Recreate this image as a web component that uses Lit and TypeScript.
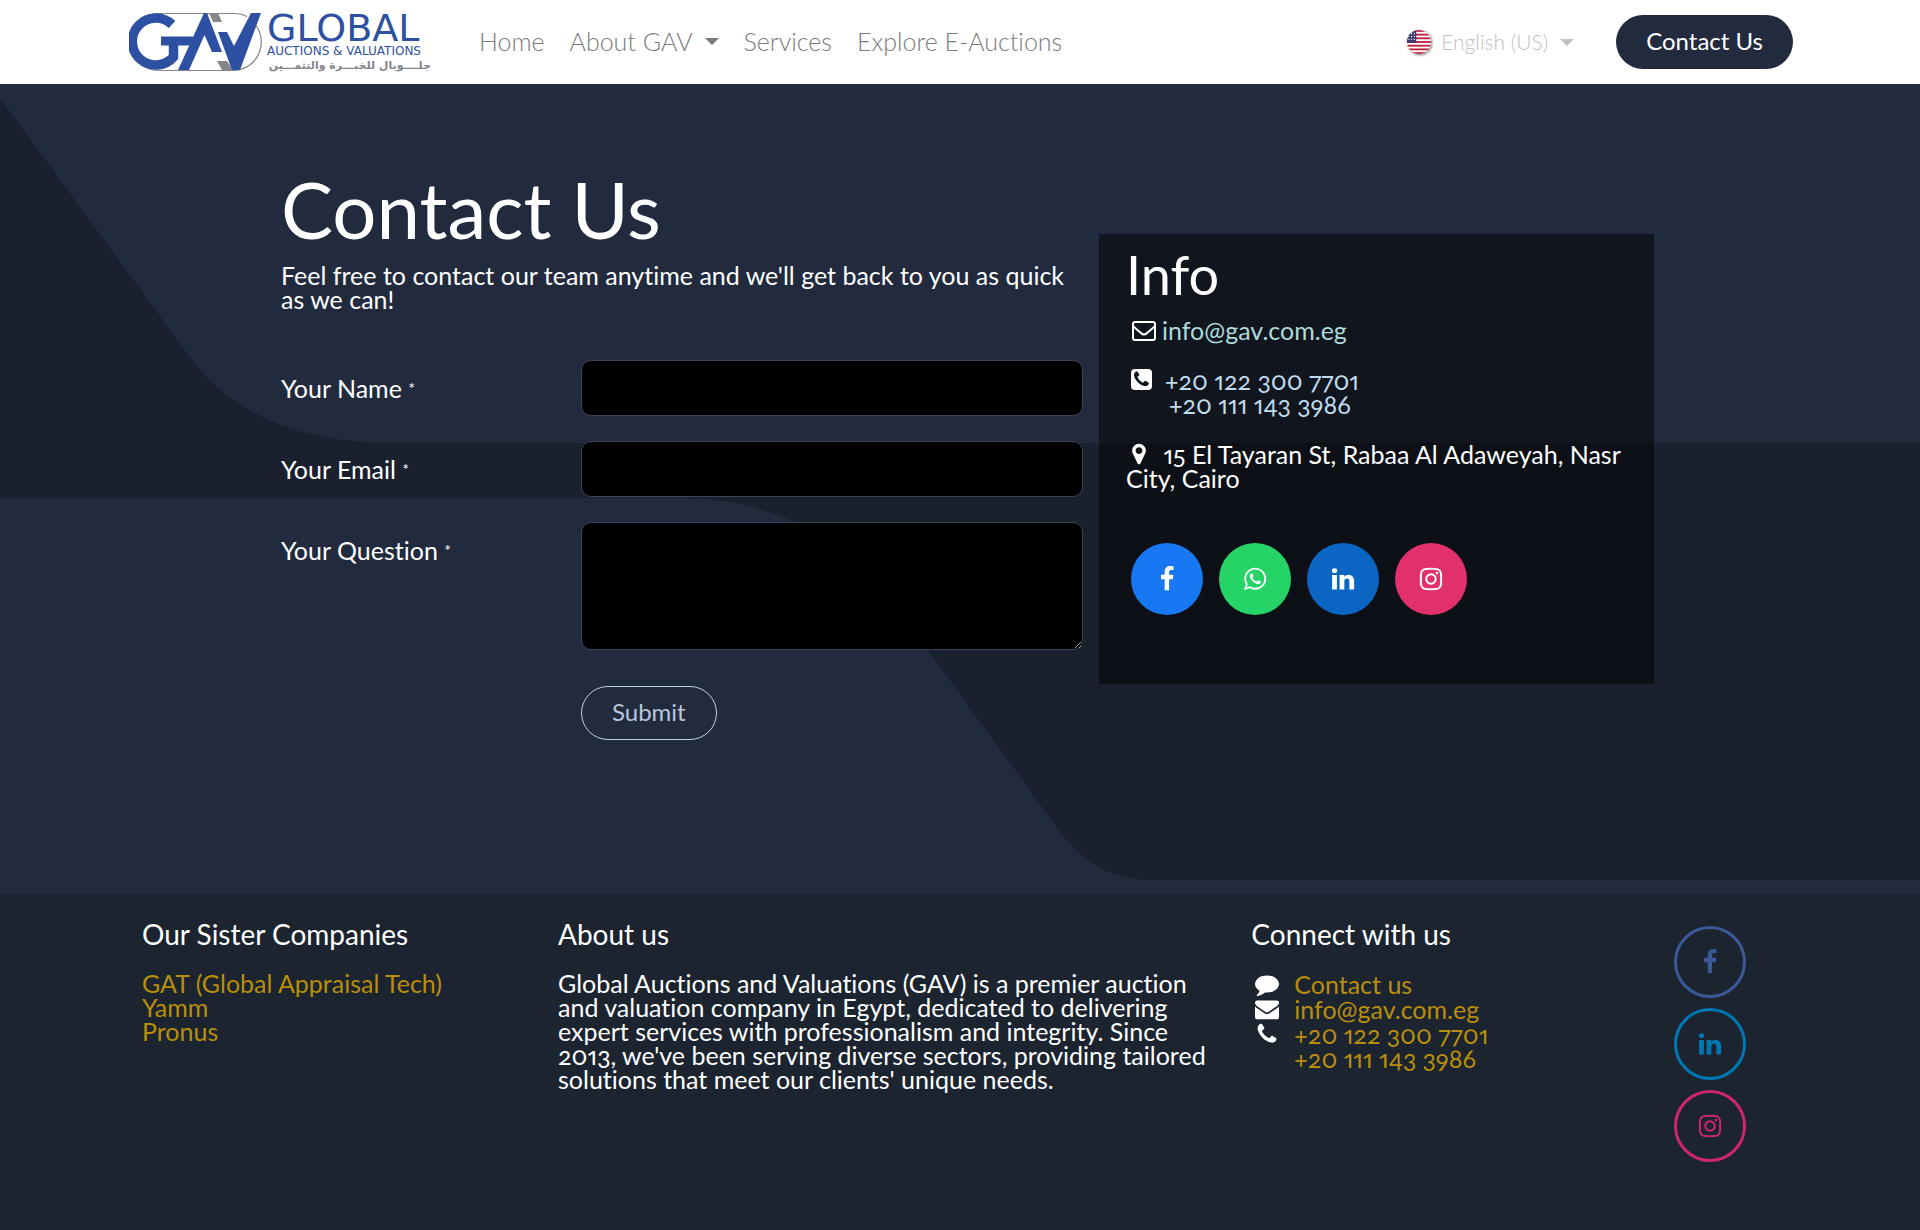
import { LitElement, html, css, svg } from "lit";
import { customElement } from "lit/decorators.js";

const ICONS = {
  facebook: "M1343 12v264h-157q-86 0-116 36t-30 108v189h293l-39 296h-254v759h-306v-759h-255v-296h255v-218q0-186 104-288.500t277-102.500q147 0 228 12z",
  linkedin: "M477 625v991h-330v-991h330zm21-306q1 73-50.500 122t-135.500 49h-2q-82 0-132-49t-50-122q0-74 51.500-122.500t134.500-48.500 133 48.500 51 122.500zm1166 729v568h-329v-530q0-105-40.500-164.500t-126.500-59.500q-63 0-105.500 34.500t-63.500 85.500q-11 30-11 81v553h-329q2-399 2-647t-1-296l-1-48h329v144h-2q20-32 41-56t56.500-52 87-43.500 114.500-15.500q171 0 275 113.500t104 332.500z",
  instagram: "M1152 896q0-106-75-181t-181-75-181 75-75 181 75 181 181 75 181-75 75-181zm138 0q0 164-115 279t-279 115-279-115-115-279 115-279 279-115 279 115 115 279zm108-410q0 38-27 65t-65 27-65-27-27-65 27-65 65-27 65 27 27 65zm-502-220q-7 0-76.500-.5t-105.500 0-96.500 3-103 10-71.500 18.500q-50 20-88 58t-58 88q-11 29-18.500 71.500t-10 103-3 96.500 0 105.500.5 76.500-.5 76.500 0 105.500 3 96.500 10 103 18.500 71.500q20 50 58 88t88 58q29 11 71.500 18.500t103 10 96.500 3 105.500 0 76.500-.5 76.500.5 105.500 0 96.500-3 103-10 71.500-18.500q50-20 88-58t58-88q11-29 18.500-71.500t10-103 3-96.500 0-105.500-.5-76.500.5-76.500 0-105.500-3-96.500-10-103-18.500-71.500q-20-50-58-88t-88-58q-29-11-71.500-18.500t-103-10-96.500-3-105.500 0-76.500.5zm768 630q0 229-5 317-10 208-124 322t-322 124q-88 5-317 5t-317-5q-208-10-322-124t-124-322q-5-88-5-317t5-317q10-208 124-322t322-124q88-5 317-5t317 5q208 10 322 124t124 322q5 88 5 317z",
  whatsapp: "M1113 974q13 0 97.500 44t89.500 53q2 5 2 15 0 33-17 76-16 39-71 65.500t-102 26.500q-57 0-190-62-98-45-170-118t-148-185q-72-107-71-194v-8q3-91 74-158 24-22 52-22 6 0 18 1.500t19 1.500q19 0 26.500 6.500t15.500 27.500q8 20 33 88t25 75q0 21-34.500 57.500t-34.500 46.500q0 7 5 15 34 73 102 137 56 53 151 101 12 7 22 7 15 0 54-48.500t52-48.500zm-203 530q127 0 243.500-50t200.500-134 134-200.500 50-243.500-50-243.500-134-200.500-200.500-134-243.500-50-243.500 50-200.500 134-134 200.500-50 243.500q0 203 120 368l-79 233 242-77q158 104 345 104zm0-1382q153 0 292.500 60t240.500 161 161 240.500 60 292.500-60 292.500-161 240.500-240.500 161-292.500 60q-195 0-365-94l-417 134 136-405q-108-178-108-389 0-153 60-292.500t161-240.500 240.500-161 292.500-60z",
  envelope: "M1792 710v794q0 66-47 113t-113 47h-1472q-66 0-113-47t-47-113v-794q44 49 101 87 362 246 497 345 57 42 92.500 65.500t94.500 48 110 24.500h2q51 0 110-24.500t94.500-48 92.500-65.500q170-123 498-345 57-39 100-87zm0-294q0 79-49 151t-122 123q-376 261-468 325-10 7-42.500 31t-54 38.500-52 32.500-57.500 27-50 9h-2q-23 0-50-9t-57.500-27-52-32.500-54-38.500-42.500-31q-91-64-262-182.500t-205-142.500q-62-42-117-115.500t-55-136.500q0-78 41.500-130t118.500-52h1472q65 0 112.500 47t47.500 113z",
  phone: "M1600 1240q0 27-10 70.500t-21 68.500q-21 50-122 106-94 51-186 51-27 0-53-3.500t-57.500-12.500-47-14.500-55.500-20.500-49-18q-98-35-175-83-127-79-264-216t-216-264q-48-77-83-175-3-9-18-49t-20.500-55.500-14.500-47-12.500-57.500-3.500-53q0-92 51-186 56-101 106-122 25-11 68.500-21t70.500-10q14 0 21 3 18 6 53 76 11 19 30 54t35 63.500 31 53.500q3 4 17.500 25t21.500 35.500 7 28.500q0 20-28.500 50t-62 55-62 53-28.500 46q0 9 5 22.500t8.500 20.500 14 24 11.500 19q76 137 174 235t235 174q2 1 19 11.500t24 14 20.500 8.500 22.500 5q18 0 46-28.500t53-62 55-62 50-28.500q14 0 28.500 7t35.500 21.500 25 17.500q25 15 53.500 31t63.500 35 54 30q70 35 76 53 3 7 3 21z",
  comment: "M1792 896q0 174-120 321.500t-326 233-450 85.500q-70 0-145-8-198 175-460 242-49 14-114 22-17 2-30.500-9t-17.500-29v-1q-3-4-.5-12t2-10 4.500-9.500l6-9 7-8.500 8-9q7-8 31-34.500t34.500-38 31-39.500 32.500-51 27-59 26-76q-157-89-247.500-220t-90.500-281q0-130 71-248.500t191-204.500 286-136.500 348-50.500 348 50.500 286 136.500 191 204.500 71 248.500z",
  marker: "M1152 640q0-106-75-181t-181-75-181 75-75 181 75 181 181 75 181-75 75-181zm256 0q0 109-33 179l-364 774q-16 33-47.500 52t-67.500 19-67.500-19-46.500-52l-365-774q-33-70-33-179 0-212 150-362t362-150 362 150 150 362z",
};

const icon = (name: keyof typeof ICONS) =>
  html`<svg class="icon" viewBox="0 0 1792 1792" aria-hidden="true"><path d=${ICONS[name]}></path></svg>`;

const caret = html`<svg class="caret" viewBox="0 0 14 7" aria-hidden="true"><path d="M0 0h14l-7 7z"></path></svg>`;

const flagStripes = [0, 2, 4, 6, 8, 10, 12].map(
  (i) => svg`<rect x="0" y=${i * 2} width="26" height="2" fill="#bf2140"></rect>`
);
const flagStars = [3, 6, 9].flatMap((y) =>
  [2, 5, 8].map((x) => svg`<circle cx=${x} cy=${y + 1} r="0.7" fill="#fff"></circle>`)
);

@customElement("app-root")
export class AppRoot extends LitElement {
  static styles = css`
    :host {
      display: block;
      min-height: 100vh;
      background: #1b242f;
      color: #fff;
      font: 400 25px/24px Lato, "Open Sans", sans-serif;
      font-variant-ligatures: none;
      font-variant-numeric: oldstyle-nums proportional-nums;
    }
    * { box-sizing: border-box; }
    h1, h2, h3, p, ul { margin: 0; padding: 0; font-weight: 400; }
    ul { list-style: none; }
    a { color: inherit; text-decoration: none; }
    .icon { width: 24px; height: 24px; fill: currentColor; display: block; }

    .header {
      display: flex;
      align-items: center;
      min-height: 84px;
      padding: 0 127px 0 129px;
      background: #fff;
      color: #7b7b7b;
    }
    .brand { display: flex; align-items: center; gap: 4px; }
    .emblem { width: 134px; height: 60px; display: block; }
    .wordmark {
      display: flex;
      flex-direction: column;
      width: 164px;
      color: #2e50a2;
      white-space: nowrap;
      font-family: "DejaVu Sans", sans-serif;
    }
    .name { font-size: 38px; line-height: 32px; }
    .tagline { font-size: 12px; line-height: 15px; }
    .arabic { font-size: 11px; line-height: 14px; font-weight: 700; color: #85868a; direction: rtl; }
    .nav { display: flex; gap: 25px; margin-left: 48px; padding-bottom: 2px; font-weight: 300; }
    .nav a { display: flex; align-items: center; gap: 12px; white-space: nowrap; }
    .caret { width: 14px; height: 7px; fill: currentColor; }
    .actions { display: flex; align-items: center; margin-left: auto; }
    .language { display: flex; align-items: center; color: #c0c1c6; }
    .flag { width: 24px; height: 24px; border-radius: 50%; box-shadow: 1px 1px 3px #0008; }
    .language select {
      appearance: none;
      border: 0;
      margin: 0 12px 0 10px;
      padding: 0;
      background: none;
      color: inherit;
      font: 300 21px/24px Lato, sans-serif;
    }
    .cta {
      margin-left: 42px;
      padding: 14px 30px 16px;
      border-radius: 27px;
      background: #212b3d;
      color: #fff;
      font-size: 24px;
      white-space: nowrap;
    }

    .hero { position: relative; background: #212b3d; }
    .waves { position: absolute; inset: 0; width: 100%; height: 100%; fill: #1a202d; }
    .content {
      position: relative;
      display: grid;
      grid-template-columns: minmax(0, 802fr) minmax(0, 555fr);
      gap: 16px;
      align-items: start;
      padding: 85px 266px 154px 281px;
    }
    .title { font-size: 78px; line-height: 80px; margin-bottom: 14px; }
    .form {
      display: grid;
      grid-template-columns: 300px minmax(0, 1fr);
      row-gap: 25px;
      margin-top: 49px;
    }
    .label { padding-top: 16px; }
    .mark { font-size: 16px; line-height: 16px; vertical-align: 4px; }
    .field {
      display: block;
      width: 100%;
      height: 56px;
      padding: 12px;
      border: 1px solid #3b4456;
      border-radius: 10px;
      background: #000;
      color: #fff;
      color-scheme: dark;
      font: inherit;
    }
    .area { height: 128px; resize: vertical; }
    .submit {
      grid-column: 2;
      justify-self: start;
      margin-top: 11px;
      padding: 13px 30px 15px;
      border: 1px solid #c3cfe6;
      border-radius: 27px;
      background: none;
      color: #b9c6de;
      font: 400 24px/24px Lato, sans-serif;
    }
    .info {
      margin-top: 65px;
      padding: 13px 27px 69px;
      background: rgba(0, 0, 0, 0.5);
    }
    .info-title { font-size: 54px; line-height: 56px; margin-bottom: 15px; }
    .line { margin-bottom: 26px; }
    .line .icon { display: inline-block; margin: 0 5px; vertical-align: -2px; }
    .line .outline { width: 26px; fill: none; stroke: currentColor; stroke-width: 2; }
    .line .slim { width: 16px; margin-right: 10px; }
    .mail { color: #aedadb; }
    .phones { display: grid; grid-template-columns: auto 1fr; color: #c0dbee; }
    .phones .icon { color: #fff; margin-right: 10px; }
    .phones .second { grid-column: 2; padding-left: 4px; }
    .socials { display: flex; gap: 16px; margin-top: 53px; padding-left: 5px; }
    .social {
      display: grid;
      place-items: center;
      width: 72px;
      height: 72px;
      border-radius: 50%;
    }
    .social .icon { width: 26px; height: 26px; }
    .fb { background: #1877f2; }
    .wa { background: #25d366; }
    .li { background: #0a66c2; }
    .ig { background: #e1306c; }

    .footer {
      display: grid;
      grid-template-columns: 3fr 5fr 3fr 1fr;
      padding: 24px 128px 69px;
    }
    .col { padding: 0 14px; }
    .heading { font-size: 28px; line-height: 32px; margin-bottom: 21px; }
    .gold { color: #b98e0c; }
    .gold a { display: block; }
    .contacts { display: grid; grid-template-columns: 24px 1fr; gap: 1px 15px; padding: 1px 0 0 4px; }
    .rings { display: grid; gap: 10px; padding: 8px 0 0 21px; align-content: start; }
    .ring { border: 3px solid; }
    .ring-fb { color: #3b5998; }
    .ring-li { color: #0077b5; }
    .ring-ig { color: #d0266f; }
  `;

  render() {
    return html`
      <header class="header">
        <a class="brand" href="#home" aria-label="Global Auctions &amp; Valuations">
          <svg class="emblem" viewBox="0 0 134 60" aria-hidden="true">
            <path d="M30 1.500h76a28 28 0 0 1 12 3M124 10a28.500 28.500 0 0 1-18 48.500h-76a28.500 28.500 0 0 1 0-57" fill="none" stroke="#85868a" stroke-width="1.200"></path>
            <path d="M80 1h9l4 9h-9zM88 49h10l6 9H93z" fill="#85868a"></path>
            <path d="M43 12.500A23.500 23.500 0 1 0 44.500 45V30" fill="none" stroke="#2e50a2" stroke-width="9.500"></path>
            <path d="M32 24.500h32v9H32z" fill="#2e50a2"></path>
            <path d="M49 58h11l15.500-35 7.500 17h10L78 1h-3z" fill="#2e50a2"></path>
            <path d="M89 20h9l7 14 17-33h10L111 58h-8z" fill="#2e50a2"></path>
          </svg>
          <span class="wordmark">
            <span class="name">GLOBAL</span>
            <span class="tagline">AUCTIONS &amp; VALUATIONS</span>
            <span class="arabic" lang="ar">جلــــوبال للخبـــرة والتثمـــين</span>
          </span>
        </a>
        <nav class="nav">
          <a href="#home">Home</a>
          <a href="#about" aria-haspopup="true">About GAV ${caret}</a>
          <a href="#services">Services</a>
          <a href="#auctions">Explore E-Auctions</a>
        </nav>
        <div class="actions">
          <label class="language">
            <svg class="flag" viewBox="0 0 26 26" aria-hidden="true">
              <rect width="26" height="26" fill="#fff"></rect>
              ${flagStripes}
              <rect width="10" height="14" fill="#3c3b6e"></rect>
              ${flagStars}
            </svg>
            <select aria-label="Language"><option>English (US)</option></select>
            ${caret}
          </label>
          <a class="cta" href="#contact">Contact Us</a>
        </div>
      </header>

      <main class="hero">
        <svg class="waves" viewBox="0 0 1920 810" preserveAspectRatio="none" aria-hidden="true">
          <path d="M0 14L190 273Q253 359 392 359H1920V796H1150Q1100 796 1066 755L1045 727L900 528Q817 414 680 414H0z"></path>
        </svg>
        <div class="content">
          <section>
            <h1 class="title">Contact Us</h1>
            <p>Feel free to contact our team anytime and we'll get back to you as quick as we can!</p>
            <form class="form">
              <label class="label" for="name">Your Name <span class="mark">*</span></label>
              <input class="field" id="name" type="text" required />
              <label class="label" for="email">Your Email <span class="mark">*</span></label>
              <input class="field" id="email" type="email" required />
              <label class="label" for="question">Your Question <span class="mark">*</span></label>
              <textarea class="field area" id="question" required></textarea>
              <button class="submit" type="submit">Submit</button>
            </form>
          </section>
          <aside class="info">
            <h2 class="info-title">Info</h2>
            <p class="line">
              <svg class="icon outline" viewBox="0 0 24 24" aria-hidden="true">
                <rect x="1" y="4" width="22" height="18" rx="2"></rect>
                <path d="M1 8q2 2 8 7 3 3 6 0 6-5 8-7"></path>
              </svg><a class="mail" href="mailto:info@gav.com.eg">info@gav.com.eg</a>
            </p>
            <div class="line phones">
              <svg class="icon" viewBox="0 0 24 24" aria-hidden="true">
                <rect x="0" y="1" width="21" height="21" rx="4"></rect>
                <path transform="translate(1 2) scale(.0105)" fill="#10161f" d=${ICONS.phone}></path>
              </svg>
              <a href="tel:+201223007701">+20 122 300 7701</a>
              <a class="second" href="tel:+201111433986">+20 111 143 3986</a>
            </div>
            <p class="line">
              <svg class="icon slim" viewBox="300 0 1192 1792" aria-hidden="true"><path d=${ICONS.marker}></path></svg>
              15 El Tayaran St, Rabaa Al Adaweyah, Nasr City, Cairo
            </p>
            <div class="socials">
              <a class="social fb" href="#facebook" aria-label="Facebook">${icon("facebook")}</a>
              <a class="social wa" href="#whatsapp" aria-label="WhatsApp">${icon("whatsapp")}</a>
              <a class="social li" href="#linkedin" aria-label="LinkedIn">${icon("linkedin")}</a>
              <a class="social ig" href="#instagram" aria-label="Instagram">${icon("instagram")}</a>
            </div>
          </aside>
        </div>
      </main>

      <footer class="footer">
        <section class="col">
          <h3 class="heading">Our Sister Companies</h3>
          <ul class="gold">
            <li><a href="#gat">GAT (Global Appraisal Tech)</a></li>
            <li><a href="#yamm">Yamm</a></li>
            <li><a href="#pronus">Pronus</a></li>
          </ul>
        </section>
        <section class="col">
          <h3 class="heading">About us</h3>
          <p>Global Auctions and Valuations (GAV) is a premier auction and valuation company in Egypt, dedicated to delivering expert services with professionalism and integrity. Since 2013, we've been serving diverse sectors, providing tailored solutions that meet our clients' unique needs.</p>
        </section>
        <section class="col">
          <h3 class="heading">Connect with us</h3>
          <div class="contacts">
            ${icon("comment")}
            <div class="gold"><a href="#contact">Contact us</a></div>
            ${icon("envelope")}
            <div class="gold"><a href="mailto:info@gav.com.eg">info@gav.com.eg</a></div>
            ${icon("phone")}
            <div class="gold">
              <a href="tel:+201223007701">+20 122 300 7701</a>
              <a href="tel:+201111433986">+20 111 143 3986</a>
            </div>
          </div>
        </section>
        <div class="rings">
          <a class="social ring ring-fb" href="#facebook" aria-label="Facebook">${icon("facebook")}</a>
          <a class="social ring ring-li" href="#linkedin" aria-label="LinkedIn">${icon("linkedin")}</a>
          <a class="social ring ring-ig" href="#instagram" aria-label="Instagram">${icon("instagram")}</a>
        </div>
      </footer>
    `;
  }
}
